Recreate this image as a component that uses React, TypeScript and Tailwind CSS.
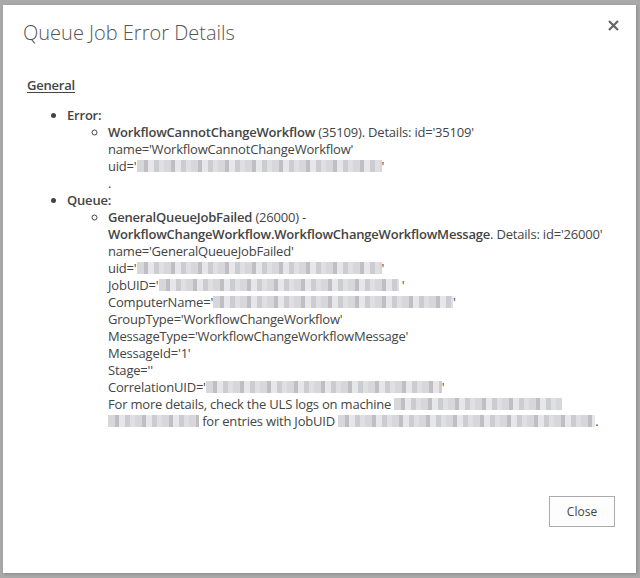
import React from "react";

const Blur = ({ w }: { w: number }) => (
  <span
    className="inline-block h-[12px] align-[-1px] bg-[repeating-linear-gradient(90deg,#d3d2d6_0px,#d3d2d6_7px,#b9b7bb_7px,#b9b7bb_11px,#e4e4e8_11px,#e4e4e8_17px,#c6c7cc_17px,#c6c7cc_22px,#dcdbdd_22px,#dcdbdd_27px)] opacity-90"
    style={{ width: w }}
  />
);

export default function App() {
  return (
    <div className="w-[640px] h-[578px] bg-[#a9a9a9] pt-[5px] pl-[3px] font-['Segoe_UI','Open_Sans',sans-serif] text-[#444]">
      <div className="relative w-[633px] h-[568px] bg-white flex flex-col shadow-[1px_1px_3px_rgba(0,0,0,0.2)]">
        <div className="pl-[20px] pt-[14px] text-[20px] leading-[28px] font-light text-[#555]">
          Queue Job Error Details
        </div>
        <button className="absolute right-[15px] top-[12px] w-[16px] h-[16px] flex items-center justify-center">
          <svg width="11" height="11" viewBox="0 0 11 11">
            <path d="M1 1L10 10M10 1L1 10" stroke="#666" strokeWidth="2.2" />
          </svg>
        </button>
        <div className="pl-[24px] pt-[30px] text-[13px] leading-[17px] tracking-[-0.2px]">
          <div className="font-semibold underline underline-offset-2 mb-[13px]">General</div>
          <ul className="list-disc pl-[40px]">
            <li>
              <span className="font-semibold">Error:</span>
              <ul className="list-[circle] pl-[41px]">
                <li>
                  <span className="font-semibold">WorkflowCannotChangeWorkflow</span> (35109). Details: id='35109'
                  <br />
                  name='WorkflowCannotChangeWorkflow'
                  <br />
                  uid='<Blur w={245} />'
                  <br />.
                </li>
              </ul>
            </li>
            <li>
              <span className="font-semibold">Queue:</span>
              <ul className="list-[circle] pl-[41px]">
                <li>
                  <span className="font-semibold">GeneralQueueJobFailed</span> (26000) -
                  <br />
                  <span className="font-semibold">WorkflowChangeWorkflow.WorkflowChangeWorkflowMessage</span>. Details: id='26000'
                  <br />
                  name='GeneralQueueJobFailed'
                  <br />
                  uid='<Blur w={245} />'
                  <br />
                  JobUID='<Blur w={240} /> '
                  <br />
                  ComputerName='<Blur w={240} />'
                  <br />
                  GroupType='WorkflowChangeWorkflow'
                  <br />
                  MessageType='WorkflowChangeWorkflowMessage'
                  <br />
                  MessageId='1'
                  <br />
                  Stage=''
                  <br />
                  CorrelationUID='<Blur w={236} />'
                  <br />
                  For more details, check the ULS logs on machine <Blur w={168} />
                  <br />
                  <Blur w={91} /> for entries with JobUID <Blur w={257} />.
                </li>
              </ul>
            </li>
          </ul>
        </div>
        <div className="mt-auto mb-[46px] mr-[21px] flex justify-end">
          <button className="w-[66px] h-[31px] border border-[#ababab] bg-[#fdfdfd] text-[12px] text-[#444]">
            Close
          </button>
        </div>
      </div>
    </div>
  );
}
